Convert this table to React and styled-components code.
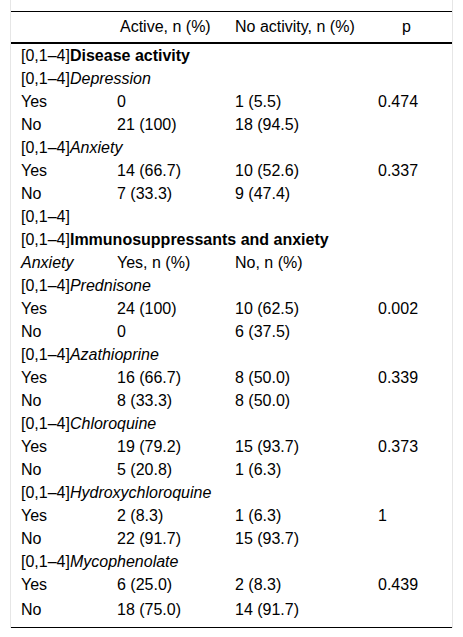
import React from "react";
import styled, { createGlobalStyle } from "styled-components";

const GlobalStyle = createGlobalStyle`
  html, body {
    margin: 0;
    padding: 0;
    background: #fff;
  }
  body {
    font-family: "Liberation Sans", Arial, sans-serif;
    color: #000;
  }
`;

const PREFIX = "[0,1\u20134]";

const rows = [
  { kind: "section", label: "Disease activity" },
  { kind: "sub", label: "Depression" },
  { kind: "data", cells: ["Yes", "0", "1 (5.5)", "0.474"] },
  { kind: "data", cells: ["No", "21 (100)", "18 (94.5)", ""] },
  { kind: "sub", label: "Anxiety" },
  { kind: "data", cells: ["Yes", "14 (66.7)", "10 (52.6)", "0.337"] },
  { kind: "data", cells: ["No", "7 (33.3)", "9 (47.4)", ""] },
  { kind: "blank" },
  { kind: "section", label: "Immunosuppressants and anxiety" },
  { kind: "colhead", cells: ["Anxiety", "Yes, n (%)", "No, n (%)", ""] },
  { kind: "sub", label: "Prednisone" },
  { kind: "data", cells: ["Yes", "24 (100)", "10 (62.5)", "0.002"] },
  { kind: "data", cells: ["No", "0", "6 (37.5)", ""] },
  { kind: "sub", label: "Azathioprine" },
  { kind: "data", cells: ["Yes", "16 (66.7)", "8 (50.0)", "0.339"] },
  { kind: "data", cells: ["No", "8 (33.3)", "8 (50.0)", ""] },
  { kind: "sub", label: "Chloroquine" },
  { kind: "data", cells: ["Yes", "19 (79.2)", "15 (93.7)", "0.373"] },
  { kind: "data", cells: ["No", "5 (20.8)", "1 (6.3)", ""] },
  { kind: "sub", label: "Hydroxychloroquine" },
  { kind: "data", cells: ["Yes", "2 (8.3)", "1 (6.3)", "1"] },
  { kind: "data", cells: ["No", "22 (91.7)", "15 (93.7)", ""] },
  { kind: "sub", label: "Mycophenolate" },
  { kind: "data", cells: ["Yes", "6 (25.0)", "2 (8.3)", "0.439"] },
  { kind: "data", cells: ["No", "18 (75.0)", "14 (91.7)", ""] },
];

const Frame = styled.div`
  margin-left: 10px;
  width: 441px;
  padding-top: 11px;
  border-left: 1px solid #e6e6e6;
  border-right: 1px solid #e6e6e6;
`;

const Table = styled.table`
  width: 441px;
  border-collapse: collapse;
  table-layout: fixed;
  font-size: 16px;
  line-height: 18px;
  border-top: 1px solid #000;
  border-bottom: 1px solid #000;
`;

const HeadCell = styled.th`
  height: 30px;
  padding: 0 0 0 ${(p) => p.$pad || 5}px;
  text-align: left;
  font-weight: normal;
  vertical-align: middle;
  border-bottom: 2px solid #000;
  white-space: nowrap;
`;

const Cell = styled.td`
  height: 23px;
  padding: 0 0 0 ${(p) => (p.$first ? 10 : 5)}px;
  vertical-align: middle;
  white-space: nowrap;
  font-style: ${(p) => (p.$italic ? "italic" : "normal")};
`;

const Row = styled.tr`
  &:last-child td {
    height: 27px;
    padding-bottom: 4px;
  }
`;

const Strong = styled.b`
  font-weight: bold;
`;

const Em = styled.i`
  font-style: italic;
`;

function TableRow({ row }) {
  if (row.kind === "section") {
    return (
      <Row>
        <Cell $first colSpan={4}>
          {PREFIX}
          <Strong>{row.label}</Strong>
        </Cell>
      </Row>
    );
  }
  if (row.kind === "sub") {
    return (
      <Row>
        <Cell $first colSpan={4}>
          {PREFIX}
          <Em>{row.label}</Em>
        </Cell>
      </Row>
    );
  }
  if (row.kind === "blank") {
    return (
      <Row>
        <Cell $first colSpan={4}>
          {PREFIX}
        </Cell>
      </Row>
    );
  }
  return (
    <Row>
      {row.cells.map((c, i) => (
        <Cell key={i} $first={i === 0} $italic={row.kind === "colhead" && i === 0}>
          {c}
        </Cell>
      ))}
    </Row>
  );
}

export default function App() {
  return (
    <>
      <GlobalStyle />
      <Frame>
        <Table>
          <colgroup>
            <col style={{ width: 101 }} />
            <col style={{ width: 118 }} />
            <col style={{ width: 143 }} />
            <col style={{ width: 79 }} />
          </colgroup>
          <thead>
            <tr>
              <HeadCell $pad={10} />
              <HeadCell $pad={8}>Active, n (%)</HeadCell>
              <HeadCell $pad={5}>No activity, n (%)</HeadCell>
              <HeadCell $pad={29}>p</HeadCell>
            </tr>
          </thead>
          <tbody>
            {rows.map((r, i) => (
              <TableRow key={i} row={r} />
            ))}
          </tbody>
        </Table>
      </Frame>
    </>
  );
}
